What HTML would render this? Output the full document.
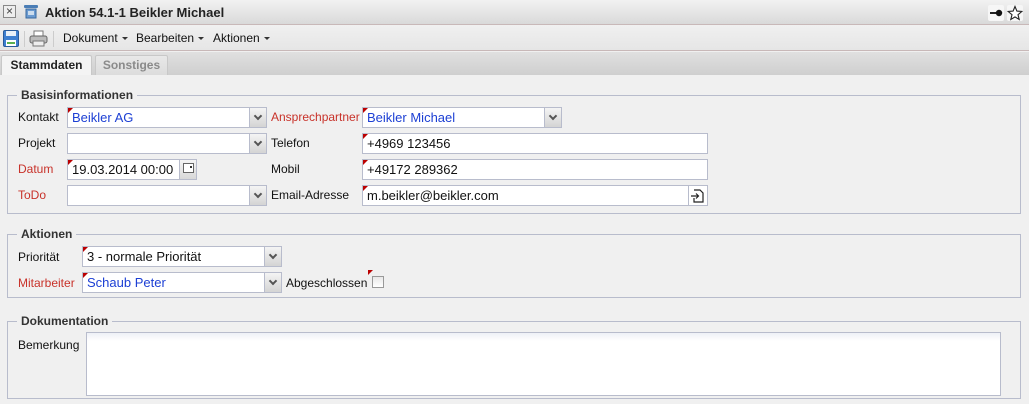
<!DOCTYPE html>
<html><head><meta charset="utf-8"><style>
*{box-sizing:border-box}
body{margin:0;width:1029px;height:404px;overflow:hidden;background:#f0f0f0;font-family:"Liberation Sans",sans-serif;font-size:12px;color:#111;position:relative}
.a{position:absolute}
.title{left:0;top:0;width:1029px;height:25px;background:linear-gradient(#f2f2f2,#d9d9d9);border-bottom:1px solid #c8b8b8}
.tb{left:0;top:25px;width:1029px;height:26px;background:linear-gradient(#f0f0f0,#e6e6e6);border-bottom:1px solid #c8b8b8}
.tabbar{left:0;top:52px;width:1029px;height:23px;background:linear-gradient(#e0e0e0,#cfcfcf)}
.tab{top:55px;height:20px;border:1px solid #c8c8c8;border-bottom:none;font-weight:bold;font-size:12px;text-align:center;line-height:18px;border-radius:2px 2px 0 0}
.fs{border:1px solid #b8bccc;left:7px;right:8px}
.lg{background:#f0f0f0;font-weight:bold;color:#333;padding:0 4px;font-size:12px}
.lb{font-size:12px;line-height:14px}
.red{color:#c8322a}
.in{background:#fff;border:1px solid #b8bccc;height:21px;line-height:19px;padding-left:4px;font-size:13px}
.in.blue{color:#1c3fd4}
.cor::before{content:"";position:absolute;left:0;top:0;border-top:5px solid #b00;border-right:5px solid transparent}
.dd{position:absolute;right:0;top:0;width:17px;height:19px;background:linear-gradient(#f4f4f4,#d4d4d4);border-left:1px solid #b8bccc}
.dd::after{content:"";position:absolute;left:5px;top:5px;width:4px;height:4px;border-right:2px solid #555;border-bottom:2px solid #555;transform:rotate(45deg)}
.menu{top:31px;font-size:12px}
.menu::after{content:"";display:inline-block;margin-left:4px;vertical-align:2px;border-top:3px solid #333;border-left:3px solid transparent;border-right:3px solid transparent}
</style></head><body>
<div class="a title"></div>
<div class="a" style="left:3px;top:5px;width:13px;height:13px;border:1px solid #888;background:#eee;font-size:12px;line-height:10px;text-align:center;color:#444">×</div>
<svg class="a" style="left:23px;top:4px" width="16" height="15"><rect x="1" y="1" width="14" height="3" rx="1" fill="#4a7db5"/><rect x="3" y="5" width="10" height="9" fill="#6a9ad0" stroke="#3a6aa0"/><rect x="5" y="7" width="6" height="4" fill="#cde"/></svg>
<div class="a" style="left:45px;top:5px;font-weight:bold;font-size:13px;color:#222">Aktion 54.1-1 Beikler Michael</div>
<svg class="a" style="left:988px;top:5px" width="40" height="16"><rect x="0" y="0" width="16" height="16" rx="2" fill="#f6f6f6"/><rect x="2" y="7" width="8" height="2" fill="#222"/><circle cx="11" cy="8" r="3.2" fill="#111"/><rect x="19" y="0" width="16" height="16" rx="2" fill="#f6f6f6"/><path d="M27 1.5l1.9 4.6 4.9.4-3.8 3.2 1.2 4.8-4.2-2.6-4.2 2.6 1.2-4.8-3.8-3.2 4.9-.4z" fill="#fff" stroke="#222" stroke-width="1.1"/></svg>
<div class="a tb"></div>
<svg class="a" style="left:3px;top:30px" width="16" height="17"><rect x="0.5" y="0.5" width="15" height="16" rx="1.5" fill="#3d7fd0" stroke="#285a9a"/><rect x="3" y="1" width="10" height="5" fill="#e8f0f8"/><rect x="3" y="10" width="10" height="6" fill="#fff"/><rect x="4" y="12" width="8" height="2" fill="#5ab050"/></svg>
<div class="a" style="left:24px;top:31px;width:1px;height:16px;background:#ccc"></div>
<svg class="a" style="left:29px;top:30px" width="19" height="17"><rect x="5" y="1" width="9" height="6" fill="#fff" stroke="#777"/><rect x="1" y="6" width="17" height="7" rx="2" fill="#bbb" stroke="#666"/><rect x="4" y="11" width="11" height="5" fill="#eee" stroke="#777"/></svg>
<div class="a" style="left:53px;top:31px;width:1px;height:16px;background:#ccc"></div>
<div class="a menu" style="left:63px">Dokument</div>
<div class="a menu" style="left:136px">Bearbeiten</div>
<div class="a menu" style="left:213px">Aktionen</div>
<div class="a tabbar"></div>
<div class="a tab" style="left:1px;width:91px;background:#f4f4f4;color:#222">Stammdaten</div>
<div class="a tab" style="left:95px;width:73px;background:linear-gradient(#e8e8e8,#dcdcdc);color:#8a8a8a">Sonstiges</div>

<div class="a fs" style="top:95px;height:119px"></div>
<div class="a lg" style="left:17px;top:88px">Basisinformationen</div>
<div class="a lb" style="left:18px;top:110px">Kontakt</div>
<div class="a in blue cor" style="left:67px;top:107px;width:200px">Beikler AG<div class="dd"></div></div>
<div class="a lb" style="left:18px;top:136px">Projekt</div>
<div class="a in" style="left:67px;top:133px;width:200px"><div class="dd"></div></div>
<div class="a lb red" style="left:18px;top:162px">Datum</div>
<div class="a in cor" style="left:67px;top:159px;width:130px">19.03.2014 00:00<div class="dd" style="background:linear-gradient(#f4f4f4,#d8d8d8)"></div></div>
<svg class="a" style="left:183px;top:163px" width="11" height="10"><rect x=".5" y=".5" width="10" height="9" fill="#fff" stroke="#666"/><rect x="7" y="3" width="2" height="2" fill="#333"/></svg>
<div class="a lb red" style="left:18px;top:188px">ToDo</div>
<div class="a in" style="left:67px;top:185px;width:200px"><div class="dd"></div></div>

<div class="a lb red" style="left:271px;top:110px">Ansprechpartner</div>
<div class="a in blue cor" style="left:362px;top:107px;width:200px">Beikler Michael<div class="dd"></div></div>
<div class="a lb" style="left:271px;top:136px">Telefon</div>
<div class="a in cor" style="left:362px;top:133px;width:346px">+4969 123456</div>
<div class="a lb" style="left:271px;top:162px">Mobil</div>
<div class="a in cor" style="left:362px;top:159px;width:346px">+49172 289362</div>
<div class="a lb" style="left:271px;top:188px">Email-Adresse</div>
<div class="a in cor" style="left:362px;top:185px;width:346px">m.beikler@beikler.com<div style="position:absolute;right:0;top:0;width:19px;height:19px;border-left:1px solid #b8bccc;background:#fff"><svg width="18" height="19"><path d="M5 4h6l3 3v9H5v-4M2 10h7M7 7.5l2.5 2.5L7 12.5" fill="none" stroke="#222" stroke-width="1.2"/></svg></div></div>

<div class="a fs" style="top:234px;height:64px"></div>
<div class="a lg" style="left:17px;top:227px">Aktionen</div>
<div class="a lb" style="left:18px;top:250px">Priorität</div>
<div class="a in cor" style="left:82px;top:246px;width:200px">3 - normale Priorität<div class="dd"></div></div>
<div class="a lb red" style="left:18px;top:276px">Mitarbeiter</div>
<div class="a in blue cor" style="left:82px;top:272px;width:200px">Schaub Peter<div class="dd"></div></div>
<div class="a lb" style="left:286px;top:276px">Abgeschlossen</div>
<div class="a cor" style="left:368px;top:270px;width:5px;height:5px"></div>
<div class="a" style="left:372px;top:276px;width:12px;height:12px;border:1px solid #999;background:linear-gradient(#e8e8e8,#fff)"></div>

<div class="a fs" style="top:321px;height:78px"></div>
<div class="a lg" style="left:17px;top:314px">Dokumentation</div>
<div class="a lb" style="left:18px;top:338px">Bemerkung</div>
<div class="a" style="left:86px;top:332px;width:915px;height:64px;background:linear-gradient(#eef0f6,#fff 8px);border:1px solid #b8bccc"></div>
</body></html>
